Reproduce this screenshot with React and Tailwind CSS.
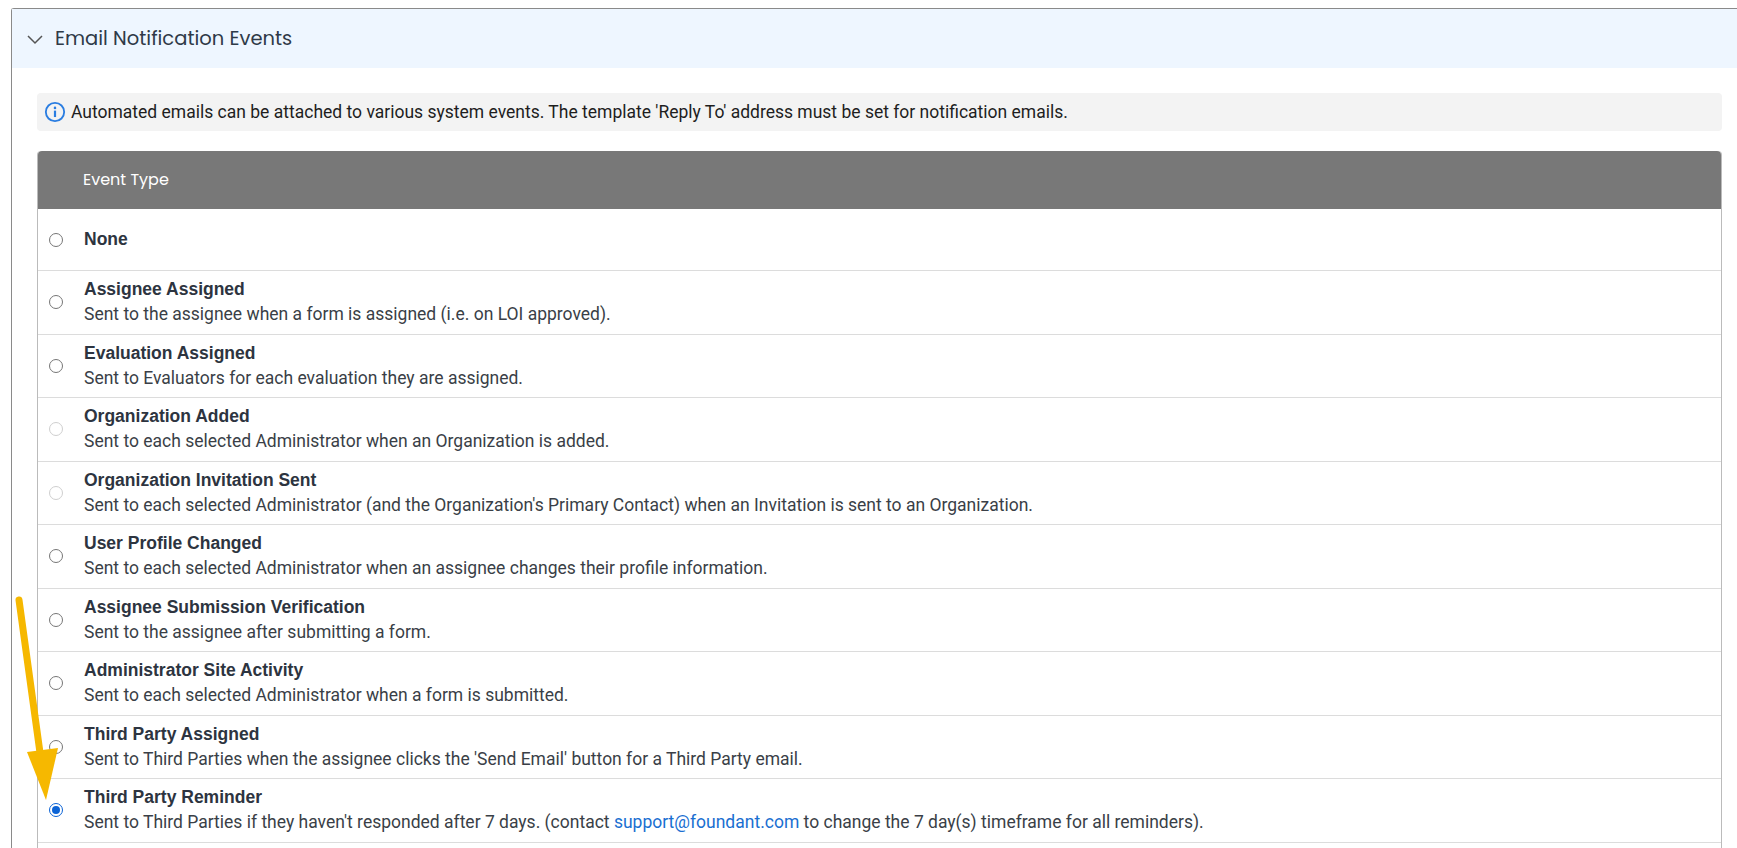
import React from "react";

const rows = [
  { t: "Assignee Assigned", d: "Sent to the assignee when a form is assigned (i.e. on LOI approved)." },
  { t: "Evaluation Assigned", d: "Sent to Evaluators for each evaluation they are assigned." },
  { t: "Organization Added", d: "Sent to each selected Administrator when an Organization is added.", dis: true },
  { t: "Organization Invitation Sent", d: "Sent to each selected Administrator (and the Organization's Primary Contact) when an Invitation is sent to an Organization.", dis: true },
  { t: "User Profile Changed", d: "Sent to each selected Administrator when an assignee changes their profile information." },
  { t: "Assignee Submission Verification", d: "Sent to the assignee after submitting a form." },
  { t: "Administrator Site Activity", d: "Sent to each selected Administrator when a form is submitted." },
  { t: "Third Party Assigned", d: "Sent to Third Parties when the assignee clicks the 'Send Email' button for a Third Party email." },
];

function Radio({ checked, dis }) {
  if (checked)
    return (
      <span className="w-[14px] h-[14px] rounded-full border border-[#0b63d6] flex items-center justify-center bg-white">
        <span className="w-[8px] h-[8px] rounded-full bg-[#0b63d6]" />
      </span>
    );
  return <span className={"w-[14px] h-[14px] rounded-full border bg-white " + (dis ? "border-[#cfcfcf]" : "border-[#767676]")} />;
}

function Row({ t, d, dis, checked, children }) {
  return (
    <div className="flex items-center border-t border-[#dcdcdc] h-[63.5px]">
      <div className="w-[46px] flex justify-start pl-[11px]"><Radio dis={dis} checked={checked} /></div>
      <div>
        <div className="font-bold text-[17.5px] text-[#2d3440] leading-[25px]" style={{ fontFamily: "'Liberation Sans', Arial, sans-serif" }}>{t}</div>
        <div className="text-[17.5px] text-[#3a3f47] leading-[25px]" style={{ fontFamily: "Roboto, sans-serif" }}>{children || d}</div>
      </div>
    </div>
  );
}

export default function App() {
  return (
    <div className="relative w-[1737px] h-[848px] bg-white overflow-hidden">
      <div className="ml-[11px] mt-[8px] border-l border-t border-[#8a8a8a] rounded-tl-[3px] h-[900px]">
        <div className="h-[59px] bg-[#eef6ff] flex items-center pl-[14px] gap-[11px]">
          <svg width="18" height="18" viewBox="0 0 18 18"><path d="M2 6l7 7 7-7" fill="none" stroke="#555" strokeWidth="1.5" /></svg>
          <span className="text-[19.5px] text-[#2f3a48]" style={{ fontFamily: "Poppins, 'Open Sans', sans-serif" }}>Email Notification Events</span>
        </div>
        <div className="pl-[25px] pr-[15px] pt-[25px]">
          <div className="h-[38px] bg-[#f3f3f3] rounded-[4px] flex items-center pl-[7px] gap-[5px]">
            <svg width="22" height="22" viewBox="0 0 24 24"><circle cx="12" cy="12" r="10" fill="none" stroke="#2a7de1" strokeWidth="2" /><circle cx="12" cy="7.5" r="1.4" fill="#2a7de1" /><path d="M12 10.5v7" stroke="#2a7de1" strokeWidth="2.4" /></svg>
            <span className="text-[17.5px] text-[#1e1e1e]" style={{ fontFamily: "Roboto, sans-serif" }}>Automated emails can be attached to various system events. The template 'Reply To' address must be set for notification emails.</span>
          </div>
          <div className="mt-[20px] border-r border-[#777] border-l border-[#bbb] rounded-t-[4px]">
            <div className="h-[58px] bg-[#787878] rounded-t-[4px] flex items-center pl-[45px] text-[16px] text-white" style={{ fontFamily: "Poppins, 'Open Sans', sans-serif" }}>Event Type</div>
            <div className="flex items-center h-[61px]">
              <div className="w-[46px] flex justify-start pl-[11px]"><Radio /></div>
              <div className="font-bold text-[17.5px] text-[#2d3440]" style={{ fontFamily: "'Liberation Sans', Arial, sans-serif" }}>None</div>
            </div>
            {rows.map((r) => <Row key={r.t} {...r} />)}
            <Row t="Third Party Reminder" checked>
              Sent to Third Parties if they haven't responded after 7 days. (contact <span className="text-[#1a6fd1]">support@foundant.com</span> to change the 7 day(s) timeframe for all reminders).
            </Row>
            <div className="border-t border-[#dcdcdc] h-[60px]" />
          </div>
        </div>
      </div>
      <svg className="absolute left-0 top-0" width="80" height="848" viewBox="0 0 80 848">
        <path d="M19 600 L41 760" stroke="#f6b800" strokeWidth="7" strokeLinecap="round" />
        <path d="M27 752 L46 800 L58 748 Z" fill="#f6b800" />
      </svg>
    </div>
  );
}
